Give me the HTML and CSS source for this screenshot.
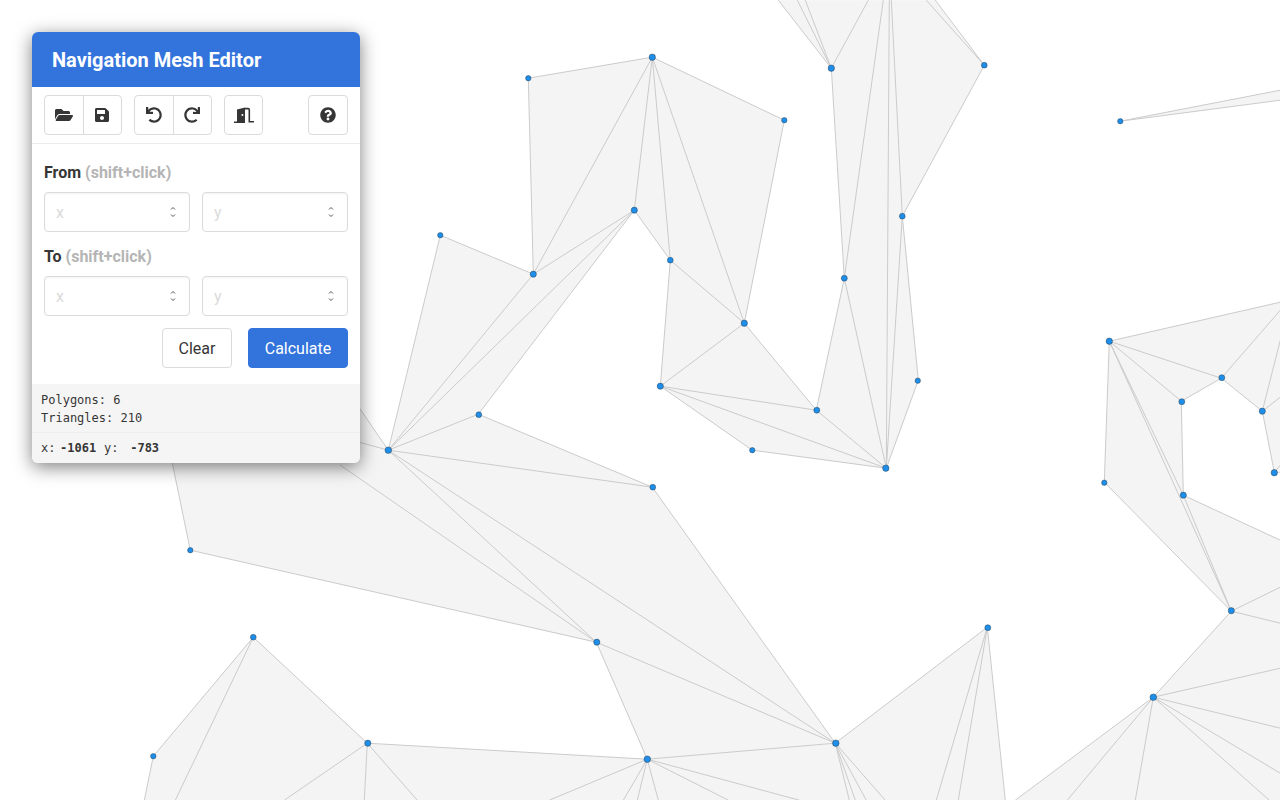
FILE: index.html
```html
<!DOCTYPE html>
<html lang="en">
<head>
<meta charset="utf-8">
<title>Navigation Mesh Editor</title>
<link rel="stylesheet" href="styles.css">
</head>
<body>
<svg class="mesh" width="1280" height="800" viewBox="0 0 1280 800">
  <g class="world">
  <g class="fill">
    <polygon points="528,78 652,57 784,120 744,323 816,410 844,278 831,68 778,0 935,0 984,65 902,216 918,380 886,468 752,450 660,386 670,260 634,210 533,274"/>
    <polygon points="440,235 533,274 634,210 478,414 652,487 835,743 647,759 596,642 190,550 172,463 172,380 340,380 388,450"/>
    <polygon points="835,743 987,627 1005,800 144,800 153,756 253,637 367,743 647,759"/>
    <polygon points="1109,341 1104,482 1231,611 1153,697 1015,800 1280,800 1280,540 1183,495 1181,401"/>
    <polygon points="1109,341 1280,302 1280,470 1274,472 1262,411 1221,378 1181,401"/>
    <polygon points="1120,121 1280,90 1280,100"/>
  </g>
  <path class="edges" d="M528 78L652 57L784 120L744 323L816 410L886 468L752 450L660 386L670 260L634 210L533 274L528 78
    M652 57L533 274M652 57L634 210M652 57L670 260M652 57L744 323M670 260L744 323L660 386L816 410M660 386L886 468
    M816 410L844 278L886 468M844 278L831 68M844 278L883 0M889 0L886 468M891 0L902 216L886 468M902 216L918 380L886 468M902 216L984 65L926 0M984 65L935 0
    M831 68L778 0M831 68L797 0M831 68L805 0M831 68L868 0
    M440 235L533 274L388 450L440 235M634 210L388 450M634 210L478 414L652 487L835 743M388 450L478 414M388 450L652 487M388 450L835 743M388 450L596 642M340 465L596 642L835 743M596 642L190 550L172 463M596 642L647 759L835 743M340 380L388 450M300 426L388 450
    M835 743L987 627L1005 800M987 627L936 800M987 627L958 800M835 743L849 800M835 743L855 800M835 743L866 800M835 743L885 800
    M647 759L658 800M647 759L728 800M647 759L799 800M647 759L549 800M647 759L623 800M647 759L637 800M647 759L367 743L253 637L153 756L144 800M253 637L175 800M367 743L284 800M367 743L364 800M367 743L417 800
    M1109 341L1280 302M1109 341L1221 378L1181 401L1109 341M1181 401L1183 495L1109 341M1109 341L1231 611L1183 495L1280 540M1109 341L1104 482L1231 611L1153 697L1015 800M1221 378L1280 310M1221 378L1262 411L1280 397M1262 411L1280 340M1262 411L1274 472L1280 465M1274 472L1280 472
    M1231 611L1280 587M1231 611L1280 623M1153 697L1280 668M1153 697L1280 728M1153 697L1280 773M1153 697L1269 800M1153 697L1135 800M1153 697L1067 800
    M1120 121L1280 90M1120 121L1280 100"/>
  <g class="nodes">
    <circle cx="528" cy="78" r="2.700"/><circle cx="652" cy="57" r="3.200"/><circle cx="784" cy="120" r="2.700"/><circle cx="634" cy="210" r="3.100"/><circle cx="533" cy="274" r="3.100"/><circle cx="670" cy="260" r="2.900"/><circle cx="744" cy="323" r="3.200"/><circle cx="660" cy="386" r="3.100"/><circle cx="816.500" cy="410" r="3"/><circle cx="752" cy="450" r="2.700"/><circle cx="885.500" cy="468" r="3.200"/><circle cx="917.500" cy="380.500" r="2.700"/><circle cx="844" cy="278" r="3"/><circle cx="902" cy="216" r="2.900"/><circle cx="984" cy="65" r="2.900"/><circle cx="831" cy="68" r="3.200"/>
    <circle cx="440" cy="235" r="2.700"/><circle cx="388" cy="450" r="3.300"/><circle cx="478.500" cy="414.500" r="2.900"/><circle cx="652.500" cy="487" r="2.900"/><circle cx="596.500" cy="642" r="3.100"/><circle cx="835.500" cy="743" r="3.300"/><circle cx="190" cy="550" r="2.700"/><circle cx="647" cy="759" r="3.300"/><circle cx="253" cy="637" r="2.900"/><circle cx="153" cy="756" r="2.700"/><circle cx="367.500" cy="743" r="3.100"/><circle cx="987.500" cy="627.500" r="3"/>
    <circle cx="1153" cy="697" r="3.300"/><circle cx="1231" cy="610.500" r="3.100"/><circle cx="1104" cy="482.500" r="2.700"/><circle cx="1183" cy="495" r="3.100"/><circle cx="1109" cy="341" r="3.200"/><circle cx="1181.500" cy="401.500" r="3"/><circle cx="1221.500" cy="377.500" r="3"/><circle cx="1262" cy="411" r="3.100"/><circle cx="1274" cy="472.500" r="3.200"/><circle cx="1120" cy="121" r="2.700"/>
  </g>
  </g>
</svg>

<aside class="panel">
  <header class="panel-head">Navigation Mesh Editor</header>

  <div class="toolbar">
    <div class="btn-group">
      <button class="tool" type="button" aria-label="Open">
        <svg class="ico ico-folder" viewBox="0 0 576 512"><path d="M572.694 292.093L500.27 416.248A63.997 63.997 0 0 1 444.989 448H45.025c-18.523 0-30.064-20.093-20.731-36.093l72.424-124.155A64 64 0 0 1 152 256h399.964c18.523 0 30.064 20.093 20.73 36.093zM152 224h328v-48c0-26.51-21.49-48-48-48H272l-64-64H48C21.49 64 0 85.49 0 112v278.046l69.077-118.418C86.214 242.25 117.989 224 152 224z"/></svg>
      </button>
      <button class="tool" type="button" aria-label="Save">
        <svg class="ico ico-save" viewBox="0 0 448 512"><path d="M433.941 129.941l-83.882-83.882A48 48 0 0 0 316.118 32H48C21.49 32 0 53.49 0 80v352c0 26.51 21.49 48 48 48h352c26.51 0 48-21.49 48-48V163.882a48 48 0 0 0-14.059-33.941zM224 416c-35.346 0-64-28.654-64-64 0-35.346 28.654-64 64-64s64 28.654 64 64c0 35.346-28.654 64-64 64zm96-304.52V212c0 6.627-5.373 12-12 12H76c-6.627 0-12-5.373-12-12V108c0-6.627 5.373-12 12-12h228.52c3.183 0 6.235 1.264 8.485 3.515l3.48 3.48A11.996 11.996 0 0 1 320 111.48z"/></svg>
      </button>
    </div>
    <div class="btn-group">
      <button class="tool" type="button" aria-label="Undo">
        <svg class="ico ico-round" viewBox="0 0 512 512"><path d="M212.333 224.333H12c-6.627 0-12-5.373-12-12V12C0 5.373 5.373 0 12 0h48c6.627 0 12 5.373 12 12v78.112C117.773 39.279 184.26 7.47 258.175 8.007c136.906.994 246.448 111.623 246.157 248.532C504.041 393.258 393.12 504 256.333 504c-64.089 0-122.496-24.313-166.51-64.215-5.099-4.622-5.334-12.554-.467-17.42l33.967-33.967c4.474-4.474 11.662-4.717 16.401-.525C170.76 415.336 211.58 432 256.333 432c97.268 0 176-78.716 176-176 0-97.267-78.716-176-176-176-58.496 0-110.28 28.476-142.274 72.333h98.274c6.627 0 12 5.373 12 12v48c0 6.627-5.373 12-12 12z"/></svg>
      </button>
      <button class="tool" type="button" aria-label="Redo">
        <svg class="ico ico-round" viewBox="0 0 512 512"><path d="M500.33 0h-47.41a12 12 0 0 0-12 12.57l4 82.76A247.42 247.42 0 0 0 256 8C119.34 8 7.9 119.53 8 256.19 8.1 393.07 119.1 504 256 504a247.1 247.1 0 0 0 166.18-63.91 12 12 0 0 0 .48-17.43l-34-34a12 12 0 0 0-16.38-.55A176 176 0 1 1 402.1 157.8l-101.53-4.87a12 12 0 0 0-12.57 12v47.41a12 12 0 0 0 12 12h200.33a12 12 0 0 0 12-12V12a12 12 0 0 0-12-12z"/></svg>
      </button>
    </div>
    <button class="tool solo door" type="button" aria-label="Portal">
      <svg class="ico ico-door" viewBox="0 0 20 16"><path fill-rule="evenodd" d="M0 16v-1.600h3V2.400L11 .4V16zM8.400 7.100a1 1 0 1 0 0 2 1 1 0 0 0 0-2z"/><path class="door-line" d="M11 1.600H14.200c.7 0 1.100.4 1.100 1.100V14.800H20"/></svg>
    </button>
    <button class="tool solo push" type="button" aria-label="Help">
      <svg class="ico ico-help" viewBox="0 0 512 512"><path d="M504 256c0 136.997-111.043 248-248 248S8 392.997 8 256C8 119.083 119.043 8 256 8s248 111.083 248 248zM262.655 90c-54.497 0-89.255 22.957-116.549 63.758-3.536 5.286-2.353 12.415 2.715 16.258l34.699 26.31c5.205 3.947 12.621 3.008 16.665-2.122 17.864-22.658 30.113-35.797 57.303-35.797 20.429 0 45.698 13.148 45.698 32.958 0 14.976-12.363 22.667-32.534 33.976C247.128 238.528 216 254.941 216 296v4c0 6.627 5.373 12 12 12h56c6.627 0 12-5.373 12-12v-1.333c0-28.462 83.186-29.647 83.186-106.667 0-58.002-60.165-102-116.531-102zM256 338c-25.365 0-46 20.635-46 46 0 25.364 20.635 46 46 46s46-20.636 46-46c0-25.365-20.635-46-46-46z"/></svg>
    </button>
  </div>

  <form class="form">
    <div class="field-label">From <span class="hint">(shift+click)</span></div>
    <div class="pair">
      <label class="num"><input type="text" placeholder="x"><svg class="spin" viewBox="0 0 6 12"><path d="M1 3.500L3 1.500L5 3.500M1 8.500L3 10.500L5 8.500"/></svg></label>
      <label class="num"><input type="text" placeholder="y"><svg class="spin" viewBox="0 0 6 12"><path d="M1 3.500L3 1.500L5 3.500M1 8.500L3 10.500L5 8.500"/></svg></label>
    </div>
    <div class="field-label">To <span class="hint">(shift+click)</span></div>
    <div class="pair">
      <label class="num"><input type="text" placeholder="x"><svg class="spin" viewBox="0 0 6 12"><path d="M1 3.500L3 1.500L5 3.500M1 8.500L3 10.500L5 8.500"/></svg></label>
      <label class="num"><input type="text" placeholder="y"><svg class="spin" viewBox="0 0 6 12"><path d="M1 3.500L3 1.500L5 3.500M1 8.500L3 10.500L5 8.500"/></svg></label>
    </div>
    <div class="actions">
      <button class="btn btn-clear" type="button">Clear</button>
      <button class="btn primary" type="button">Calculate</button>
    </div>
  </form>

  <div class="stats">
    <div class="stats-counts">
      <div>Polygons: 6</div>
      <div>Triangles: 210</div>
    </div>
    <div class="stats-pos"><span>x:</span><b class="coord">-1061</b><span class="axis-y">y:</span><b class="coord">-783</b></div>
  </div>
</aside>
</body>
</html>
```

FILE: styles.css
```css
* { box-sizing: border-box; }

html, body {
  margin: 0;
  height: 100%;
  overflow: hidden;
  background: #fff;
}

body {
  font-family: Roboto, "Liberation Sans", sans-serif;
  color: #363636;
}

.mesh {
  position: absolute;
  left: 0;
  top: 0;
  display: block;
}

.world { transform: translate(0.3px, 0.2px); }

.fill polygon { fill: #f4f4f4; }

.edges {
  fill: none;
  stroke: #cbcbcb;
  stroke-width: 1;
}

.nodes circle {
  fill: #1e8ee8;
  stroke: rgba(40, 50, 60, 0.7);
  stroke-width: 0.6;
}

.panel {
  position: absolute;
  left: 32px;
  top: 32px;
  width: 328px;
  height: 431px;
  display: flex;
  flex-direction: column;
  background: #fff;
  border-radius: 6px;
  overflow: hidden;
  box-shadow: 0 4px 18px rgba(0, 0, 0, 0.5);
}

.panel-head {
  height: 55px;
  flex: none;
  display: flex;
  align-items: center;
  padding-left: 20px;
  background: #3273dc;
  color: #fff;
  font-size: 20px;
  font-weight: 700;
}

.toolbar {
  height: 57px;
  flex: none;
  display: flex;
  align-items: flex-start;
  gap: 12px;
  padding: 8px 12px 0;
  border-bottom: 1px solid #ededed;
}

.btn-group { display: flex; }

.tool {
  width: 39.5px;
  height: 40px;
  padding: 0;
  display: flex;
  align-items: center;
  justify-content: center;
  background: #fff;
  border: 1px solid #dbdbdb;
  border-radius: 4px;
}

.btn-group .tool:first-child { border-radius: 4px 0 0 4px; }
.btn-group .tool:last-child { border-radius: 0 4px 4px 0; margin-left: -1px; }
.door { width: 39px; }
.push { margin-left: auto; width: 40px; }

.ico { display: block; fill: #363636; }
.ico-folder { width: 18px; height: 16px; }
.ico-save { width: 14px; height: 16px; }
.ico-round { width: 16px; height: 16px; }
.ico-help { width: 16px; height: 16px; }
.ico-door { width: 20px; height: 16px; }
.door-line { fill: none; stroke: #363636; stroke-width: 1.600; }

.form {
  flex: none;
  height: 240px;
  padding: 16px 12px 0;
}

.field-label {
  height: 26px;
  line-height: 26px;
  font-size: 16px;
  font-weight: 700;
  color: #363636;
}

.hint { color: #b5b5b5; font-weight: 700; }

.pair {
  display: flex;
  gap: 12px;
  margin: 6px 0 12px;
}

.num {
  width: 146px;
  height: 40px;
  display: flex;
  align-items: center;
  padding: 0 13px 0 11px;
  background: #fff;
  border: 1px solid #dbdbdb;
  border-radius: 4px;
  box-shadow: inset 0 1px 2px rgba(10, 10, 10, 0.05);
}

.num input {
  flex: 1;
  min-width: 0;
  padding: 0;
  border: 0;
  outline: 0;
  background: transparent;
  font: 400 16px Roboto, "Liberation Sans", sans-serif;
  color: #363636;
}

.num input::placeholder { color: #dbdbdb; }

.spin { flex: none; width: 6px; height: 12px; }
.spin path { fill: none; stroke: #555; stroke-width: 1; }

.actions {
  display: flex;
  justify-content: flex-end;
  gap: 16px;
}

.btn {
  width: 100px;
  height: 40px;
  padding: 0;
  font: 400 16px Roboto, "Liberation Sans", sans-serif;
  color: #363636;
  background: #fff;
  border: 1px solid #dbdbdb;
  border-radius: 4px;
}

.btn-clear { width: 70px; }

.btn.primary {
  color: #fff;
  background: #3273dc;
  border-color: #3273dc;
}

.stats {
  flex: 1;
  background: #f5f5f5;
  font: 12px/18px "DejaVu Sans Mono", monospace;
  color: #363636;
}

.stats-counts {
  height: 49px;
  padding: 7px 9px 0;
  border-bottom: 1px solid #ededed;
}

.stats-pos {
  display: flex;
  padding: 6px 9px 0;
}

.coord {
  width: 36px;
  margin-left: 4.6px;
  font-weight: 700;
  text-align: right;
}

.axis-y { margin-left: 8px; }
```
